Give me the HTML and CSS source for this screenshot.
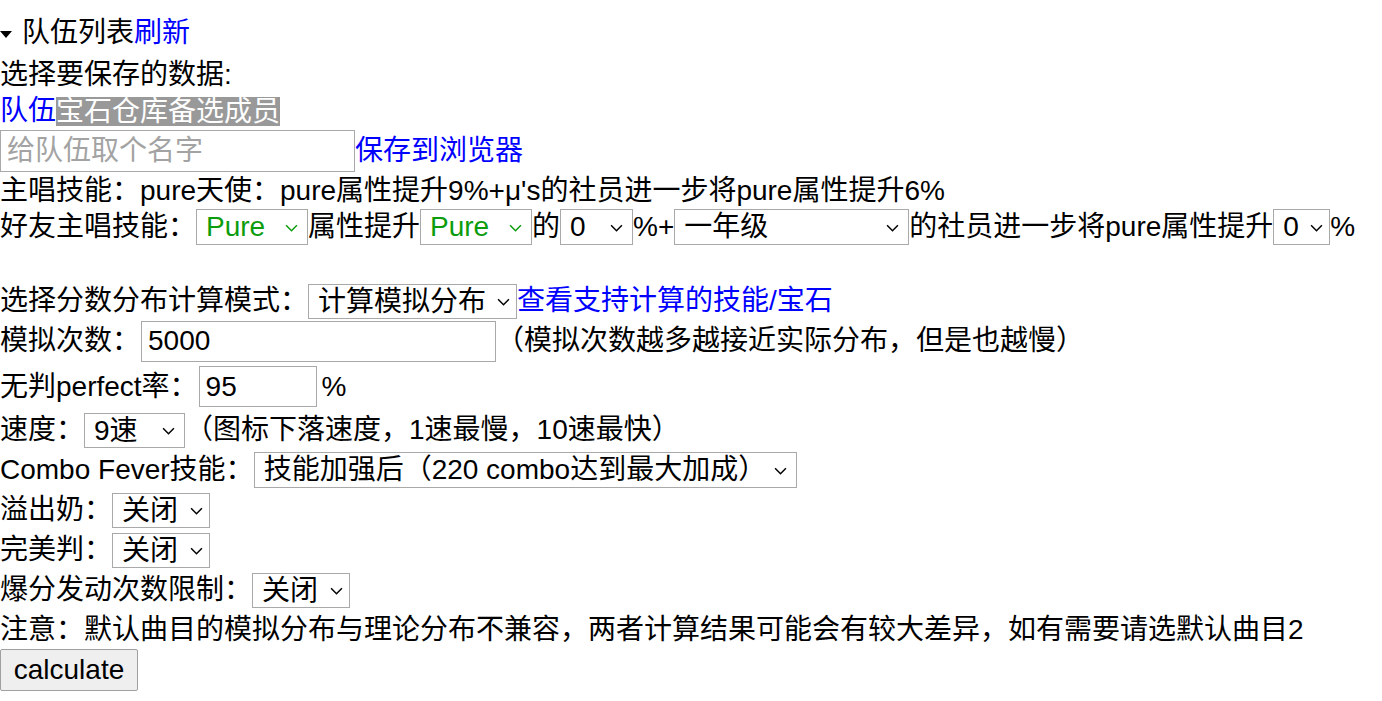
FILE: index.html
```html
<!DOCTYPE html>
<html lang="zh-CN">
<head>
<meta charset="utf-8">
<title>队伍列表</title>
<link rel="stylesheet" href="styles.css">
</head>
<body>
<details class="team" open>
  <summary class="row team-summary"><span class="marker"></span>队伍列表<a class="link" href="#">刷新</a></summary>
  <div class="row">选择要保存的数据:</div>
  <div class="row"><a class="link" href="#">队伍</a><span class="tab-off">宝石仓库备选成员</span></div>
  <div class="row row-name"><input class="text-input name-input" type="text" placeholder="给队伍取个名字"><a class="link" href="#">保存到浏览器</a></div>
</details>
<div class="row">主唱技能：pure天使：pure属性提升9%+μ's的社员进一步将pure属性提升6%</div>
<div class="row row-friend">好友主唱技能：<span class="sel-wrap green"><select class="sel sel-attr"><option>Smile</option><option selected>Pure</option><option>Cool</option></select><svg class="chev" viewBox="0 0 12 7"><polyline points="1,1 6,6 11,1"/></svg></span>属性提升<span class="sel-wrap green"><select class="sel sel-attr"><option>Smile</option><option selected>Pure</option><option>Cool</option></select><svg class="chev" viewBox="0 0 12 7"><polyline points="1,1 6,6 11,1"/></svg></span>的<span class="sel-wrap"><select class="sel sel-num"><option selected>0</option><option>3</option><option>4</option><option>6</option><option>7</option><option>9</option><option>12</option></select><svg class="chev" viewBox="0 0 12 7"><polyline points="1,1 6,6 11,1"/></svg></span>%+<span class="sel-wrap"><select class="sel sel-grade"><option selected>一年级</option><option>二年级</option><option>三年级</option></select><svg class="chev" viewBox="0 0 12 7"><polyline points="1,1 6,6 11,1"/></svg></span>的社员进一步将pure属性提升<span class="sel-wrap"><select class="sel sel-small"><option selected>0</option><option>1</option></select><svg class="chev chev-tight" viewBox="0 0 12 7"><polyline points="1,1 6,6 11,1"/></svg></span>%</div>
<div class="row row-blank"></div>
<div class="row row-mode">选择分数分布计算模式：<span class="sel-wrap"><select class="sel sel-mode"><option selected>计算模拟分布</option><option>计算理论分布</option></select><svg class="chev chev-tight" viewBox="0 0 12 7"><polyline points="1,1 6,6 11,1"/></svg></span><a class="link" href="#">查看支持计算的技能/宝石</a></div>
<div class="row row-sim">模拟次数：<input class="text-input sim-input" type="text" value="5000">（模拟次数越多越接近实际分布，但是也越慢）</div>
<div class="row row-pct">无判perfect率：<input class="text-input pct-input" type="text" value="95">%</div>
<div class="row row-sel">速度：<span class="sel-wrap"><select class="sel sel-speed"><option>1速</option><option>8速</option><option selected>9速</option><option>10速</option></select><svg class="chev" viewBox="0 0 12 7"><polyline points="1,1 6,6 11,1"/></svg></span>（图标下落速度，1速最慢，10速最快）</div>
<div class="row row-sel">Combo Fever技能：<span class="sel-wrap"><select class="sel sel-combo"><option selected>技能加强后（220 combo达到最大加成）</option><option>技能加强前（300 combo达到最大加成）</option></select><svg class="chev" viewBox="0 0 12 7"><polyline points="1,1 6,6 11,1"/></svg></span></div>
<div class="row row-sel">溢出奶：<span class="sel-wrap"><select class="sel sel-off"><option selected>关闭</option><option>开启</option></select><svg class="chev chev-tight" viewBox="0 0 12 7"><polyline points="1,1 6,6 11,1"/></svg></span></div>
<div class="row row-sel">完美判：<span class="sel-wrap"><select class="sel sel-off"><option selected>关闭</option><option>开启</option></select><svg class="chev chev-tight" viewBox="0 0 12 7"><polyline points="1,1 6,6 11,1"/></svg></span></div>
<div class="row row-sel">爆分发动次数限制：<span class="sel-wrap"><select class="sel sel-off"><option selected>关闭</option><option>开启</option></select><svg class="chev chev-tight" viewBox="0 0 12 7"><polyline points="1,1 6,6 11,1"/></svg></span></div>
<div class="row row-note">注意：默认曲目的模拟分布与理论分布不兼容，两者计算结果可能会有较大差异，如有需要请选默认曲目2</div>
<div class="row row-btn"><button class="calc-btn" type="button">calculate</button></div>
</body>
</html>
```
FILE: styles.css
```css
html, body {
  background: #fff;
}
body {
  margin: 0;
  padding-top: 15px;
  font-family: "Liberation Sans", Arial, "Noto Sans CJK SC", sans-serif;
  font-size: 28px;
  line-height: 36px;
  color: #000;
}
.team {
  margin: 0;
}
.row {
  display: flex;
  align-items: center;
  height: 36px;
  white-space: nowrap;
}
.team-summary {
  list-style: none;
  cursor: pointer;
  margin-bottom: 6px;
}
.team-summary::-webkit-details-marker {
  display: none;
}
.marker {
  width: 0;
  height: 0;
  border-left: 6px solid transparent;
  border-right: 6px solid transparent;
  border-top: 7px solid #000;
  margin: 3px 10px 0 0;
}
.link {
  color: #0000ff;
  text-decoration: none;
}
.tab-off {
  background: #999999;
  color: #ffffff;
  height: 29px;
  line-height: 29px;
}
.row-name { height: 44px; }
.row-friend { height: 36px; }
.row-blank { height: 38px; }
.row-mode { height: 36px; }
.row-sim { height: 44px; }
.row-pct { height: 47px; }
.row-sel { height: 40px; }
.row-note { height: 38px; padding-top: 2px; box-sizing: border-box; }
.row-btn { height: 45px; align-items: flex-start; padding-top: 1px; box-sizing: border-box; }

.text-input {
  font-family: inherit;
  font-size: 28px;
  border: 1px solid #a9a9a9;
  border-radius: 0;
  padding: 0 6px;
  margin: 0;
  box-sizing: border-box;
  height: 42px;
  color: #000;
  background: #fff;
  outline: none;
}
.text-input::placeholder {
  color: #a3a3a3;
}
.name-input { width: 355px; height: 42px; }
.sim-input { width: 355px; height: 41px; margin-left: 1px; }
.pct-input { width: 118px; height: 41px; margin-left: 1px; margin-right: 5px; }

.sel-wrap {
  position: relative;
  display: inline-flex;
  color: #000;
}
.sel-wrap.green {
  color: #0c9c0c;
}
.sel {
  -webkit-appearance: none;
  appearance: none;
  font-family: inherit;
  font-size: 28px;
  border: 1px solid #a9a9a9;
  border-radius: 0;
  background-color: #fff;
  color: inherit;
  box-sizing: border-box;
  height: 36px;
  margin: 0;
  padding: 0 20px 0 9px;
  line-height: 34px;
}
.chev {
  position: absolute;
  right: 10px;
  top: 50%;
  width: 13px;
  height: 8px;
  margin-top: -3px;
  fill: none;
  stroke: currentColor;
  stroke-width: 1.4;
  pointer-events: none;
}
.chev-tight {
  right: 7px;
}
.sel-attr { width: 112px; }
.sel-num { width: 73px; }
.sel-grade { width: 235px; }
.sel-small { width: 57px; }
.sel-mode { width: 209px; height: 35px; }
.sel-speed { width: 101px; height: 35px; }
.sel-combo { width: 543px; height: 36px; }
.sel-off { width: 98px; height: 35px; }

.calc-btn {
  font-family: inherit;
  font-size: 28px;
  width: 138px;
  height: 42px;
  margin: 0;
  padding: 0 8px;
  background: #efefef;
  border: 1px solid #a0a0a0;
  border-radius: 2px;
  color: #000;
}
```
